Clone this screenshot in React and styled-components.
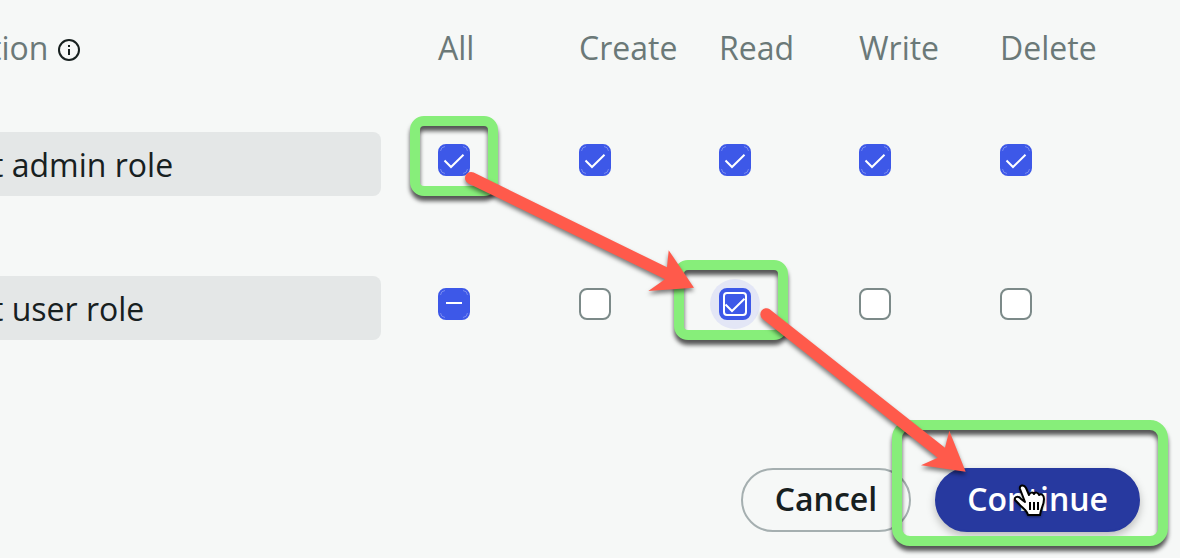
import React, { useEffect, useRef } from "react";
import styled, { createGlobalStyle, css } from "styled-components";

const GlobalStyle = createGlobalStyle`
  *, *::before, *::after { box-sizing: border-box; }
  html { background: #f6f8f7; }
  body {
    margin: 0;
    background: #f6f8f7;
    color: #17201f;
    font-family: "Open Sans", "Noto Sans", sans-serif;
    font-size: 32px;
    line-height: 44px;
    overflow-x: hidden;
  }
`;

const Page = styled.main`
  overflow: hidden;
  min-height: 100vh;
`;

const RolesForm = styled.form`
  margin-left: -8px;
`;

const PermissionTable = styled.table`
  width: 100%;
  table-layout: fixed;
  border-collapse: collapse;
`;

const Column = styled.col`
  width: ${({ $width }) => $width}px;
`;

const HeadCell = styled.th`
  height: 132px;
  padding: 26px 0 0;
  vertical-align: top;
  text-align: left;
  font-weight: 400;
  color: #6b7978;
  white-space: nowrap;
`;

const HeadLabel = styled.span`
  display: flex;
  align-items: center;
  gap: 9px;
  margin-left: -2px;

  svg {
    margin-top: 4px;
  }
`;

const Cell = styled.td`
  height: 144px;
  padding: 0;
  vertical-align: top;
`;

const RoleField = styled.input`
  display: block;
  width: calc(100% - 57px);
  height: 64px;
  padding: 0;
  border: 0;
  border-radius: 0 8px 8px 0;
  background: #e4e7e7;
  color: inherit;
  font: inherit;
  outline: none;
`;

const CheckWrap = styled.div`
  position: relative;
  display: grid;
  width: 32px;
  height: 32px;
  margin-top: 12px;
  border-radius: 8px;
`;

const Halo = styled.span`
  position: absolute;
  inset: -9px;
  border-radius: 50%;
  background: #e3e6f6;
`;

const CheckInput = styled.input`
  position: relative;
  grid-area: 1 / 1;
  appearance: none;
  width: 32px;
  height: 32px;
  margin: 0;
  border: 2px solid #7c8a89;
  border-radius: 8px;
  background: #fff;
  outline: none;
  ${({ $filled }) =>
    $filled &&
    css`
      border-color: #3d58e8;
      background: #3d58e8;
    `}
`;

const CheckMark = styled.svg`
  position: relative;
  grid-area: 1 / 1;
  fill: none;
  stroke: #fff;
  stroke-width: 2;
  pointer-events: none;
`;

const frameInsets = {
  all: "-28px -28px -20px -28px",
  read: "-28px -37px -20px -45px",
  submit: "-48px -28px -14px -43px",
};

const Frame = styled.span`
  position: absolute;
  z-index: 1;
  inset: ${({ $around }) => frameInsets[$around]};
  border: 10px solid #87ee7a;
  border-radius: ${({ $around }) => ($around === "submit" ? 18 : 14)}px;
  filter: drop-shadow(0 5px 2px rgba(0, 0, 0, 0.65));
  pointer-events: none;
`;

const ArrowSvg = styled.svg`
  position: absolute;
  z-index: 2;
  top: 0;
  left: 0;
  overflow: visible;
  fill: #ff5a4b;
  filter: drop-shadow(0 3px 2px rgba(0, 0, 0, 0.5));
  pointer-events: none;
`;

const Actions = styled.div`
  display: flex;
  justify-content: flex-end;
  gap: 24px;
  margin-top: 48px;
  padding: 0 40px 26px 0;
`;

const PillButton = styled.button`
  height: 64px;
  padding: 0 ${({ $primary }) => ($primary ? 30 : 32)}px 2px;
  border: 2px solid ${({ $primary }) => ($primary ? "#27399f" : "#a5afb0")};
  border-radius: 32px;
  background: ${({ $primary }) => ($primary ? "#27399f" : "transparent")};
  color: ${({ $primary }) => ($primary ? "#fff" : "#17201f")};
  box-shadow: ${({ $primary }) => ($primary ? "0 4px 8px rgba(0, 0, 0, 0.25)" : "none")};
  font: inherit;
  font-weight: 600;
`;

const SubmitWrap = styled.div`
  position: relative;
`;

const Pointer = styled.svg`
  position: absolute;
  z-index: 3;
  top: 16px;
  left: 78px;
  pointer-events: none;
  filter: drop-shadow(0 1px 1px rgba(0, 0, 0, 0.4));
`;

function Check({ label, state, focused, children }) {
  const ref = useRef(null);
  useEffect(() => {
    ref.current.indeterminate = state === "mixed";
  }, [state]);
  return (
    <CheckWrap>
      {focused && <Halo />}
      <CheckInput
        ref={ref}
        type="checkbox"
        aria-label={label}
        defaultChecked={state === "on"}
        $filled={state !== "off"}
      />
      {state !== "off" && (
        <CheckMark width="32" height="32" viewBox="0 0 32 32" aria-hidden="true">
          {focused ? (
            <rect x="5" y="5" width="22" height="22" rx="3" />
          ) : (
            <path
              d="M2.5 7A5 5 0 0 1 7 2.5M25 2.5A5 5 0 0 1 29.5 7M29.5 25A5 5 0 0 1 25 29.5M7 29.5A5 5 0 0 1 2.5 25"
              strokeWidth="1"
              strokeOpacity="0.3"
            />
          )}
          {state === "mixed" ? <path d="M8 15H24" /> : <path d="M6.5 16.5L13 23L25.5 10.8" />}
        </CheckMark>
      )}
      {children}
    </CheckWrap>
  );
}

function InfoIcon() {
  return (
    <svg width="24" height="24" viewBox="0 0 24 24" fill="none" stroke="#17201f" strokeWidth="2" aria-hidden="true">
      <circle cx="12" cy="12" r="10" />
      <path d="M12 11V17M12 7V9" />
    </svg>
  );
}

function Arrow({ path }) {
  return (
    <ArrowSvg width="32" height="32" viewBox="0 0 32 32" aria-hidden="true">
      <path d={path} />
    </ArrowSvg>
  );
}

const toReadArrow =
  "M35.7 28.6A6 6 0 0 0 30.4 39.4L227 135.3L210.3 147L256 143.7L230.7 106.3L229 123.3Z";
const toSubmitArrow =
  "M50.7 21.3A6 6 0 0 0 43.3 30.7L218.7 169.7L202 177.3L246.7 183.7L230.3 142.7L226 159.7Z";

const permissions = ["All", "Create", "Read", "Write", "Delete"];
const roles = [
  { name: "t admin role", states: ["on", "on", "on", "on", "on"] },
  { name: "t user role", states: ["mixed", "off", "on", "off", "off"] },
];

export default function App() {
  return (
    <Page>
      <GlobalStyle />
      <RolesForm onSubmit={(event) => event.preventDefault()}>
        <PermissionTable>
          <colgroup>
            <col />
            <Column $width={141} />
            <Column $width={140} />
            <Column $width={140} />
            <Column $width={141} />
            <Column $width={180} />
          </colgroup>
          <thead>
            <tr>
              <HeadCell scope="col">
                <HeadLabel>
                  tion
                  <InfoIcon />
                </HeadLabel>
              </HeadCell>
              {permissions.map((permission) => (
                <HeadCell key={permission} scope="col">
                  {permission}
                </HeadCell>
              ))}
            </tr>
          </thead>
          <tbody>
            {roles.map((role, row) => (
              <tr key={role.name}>
                <Cell>
                  <RoleField aria-label="Role" defaultValue={role.name} />
                </Cell>
                {role.states.map((state, column) => {
                  const fromAll = row === 0 && column === 0;
                  const fromRead = row === 1 && column === 2;
                  return (
                    <Cell key={permissions[column]}>
                      <Check
                        label={`${role.name}: ${permissions[column]}`}
                        state={state}
                        focused={fromRead}
                      >
                        {fromAll && <Frame $around="all" />}
                        {fromAll && <Arrow path={toReadArrow} />}
                        {fromRead && <Frame $around="read" />}
                        {fromRead && <Arrow path={toSubmitArrow} />}
                      </Check>
                    </Cell>
                  );
                })}
              </tr>
            ))}
          </tbody>
        </PermissionTable>
        <Actions>
          <PillButton type="button">Cancel</PillButton>
          <SubmitWrap>
            <PillButton type="submit" $primary>
              Continue
            </PillButton>
            <Frame $around="submit" />
            <Pointer width="36" height="36" viewBox="0 0 36 36" aria-hidden="true">
              <path
                d="M12 18L7 5C6 1 11 0 13 4L16 11C17 8 20 8 21 10C22 8 25 8 26 11C28 9 31 11 31 15C31 21 28 24 27 31H15C14 26 9 24 6 20L2 16C1 12 6 12 8 15Z"
                fill="#fff"
                stroke="#000"
                strokeWidth="2"
                strokeLinejoin="round"
              />
              <path d="M17 18V26M21 18V26M25 18V26" stroke="#000" strokeWidth="2" />
            </Pointer>
          </SubmitWrap>
        </Actions>
      </RolesForm>
    </Page>
  );
}
